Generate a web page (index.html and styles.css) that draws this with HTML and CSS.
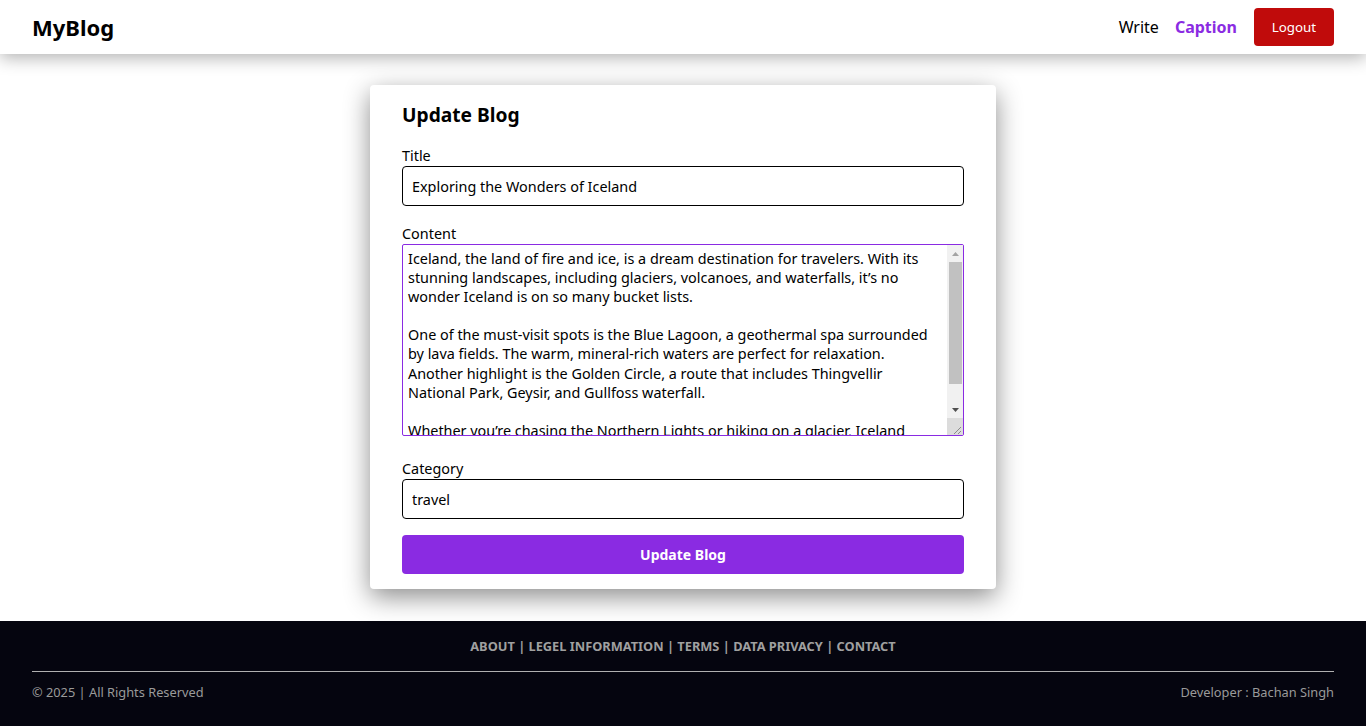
FILE: index.html
```html
<!DOCTYPE html>
<html lang="en">
<head>
<meta charset="utf-8">
<title>MyBlog - Update Blog</title>
<link rel="stylesheet" href="styles.css">
</head>
<body>
<header class="navbar">
  <a class="brand" href="#">MyBlog</a>
  <nav class="nav-links">
    <a class="nav-link" href="#">Write</a>
    <a class="nav-link nav-user" href="#">Caption</a>
    <button class="btn-logout" type="button">Logout</button>
  </nav>
</header>

<main class="main">
  <form class="card">
    <h2 class="card-title">Update Blog</h2>
    <div class="field">
      <label class="label" for="title">Title</label>
      <input class="input" id="title" type="text" value="Exploring the Wonders of Iceland">
    </div>
    <div class="field field-content">
      <label class="label" for="content">Content</label>
      <div class="textarea-wrap">
        <textarea class="textarea" id="content">Iceland, the land of fire and ice, is a dream destination for travelers. With its stunning landscapes, including glaciers, volcanoes, and waterfalls, it’s no wonder Iceland is on so many bucket lists.

One of the must-visit spots is the Blue Lagoon, a geothermal spa surrounded by lava fields. The warm, mineral-rich waters are perfect for relaxation. Another highlight is the Golden Circle, a route that includes Thingvellir National Park, Geysir, and Gullfoss waterfall.

Whether you’re chasing the Northern Lights or hiking on a glacier, Iceland offers unforgettable experiences for every kind of adventurer. Don’t forget to try local dishes and enjoy the warm hospitality of the Icelandic people.</textarea>
        <div class="scrollbar" aria-hidden="true">
          <div class="sb-btn">
            <svg width="7" height="4" viewBox="0 0 7 4"><path d="M3.5 0L7 4H0z" fill="#a3a3a3"/></svg>
          </div>
          <div class="sb-track">
            <div class="sb-thumb"></div>
          </div>
          <div class="sb-btn">
            <svg width="7" height="4" viewBox="0 0 7 4"><path d="M0 0h7L3.5 4z" fill="#505050"/></svg>
          </div>
          <div class="sb-resizer">
            <svg width="16" height="17" viewBox="0 0 16 17"><path d="M14 9L7 16M14 13L11 16" stroke="#8a8a8a" stroke-width="1"/></svg>
          </div>
        </div>
      </div>
    </div>
    <div class="field">
      <label class="label" for="category">Category</label>
      <input class="input" id="category" type="text" value="travel">
    </div>
    <button class="btn-submit" type="button">Update Blog</button>
  </form>
</main>

<footer class="footer">
  <div class="footer-links">
    <a href="#">ABOUT</a> | <a href="#">LEGEL INFORMATION</a> | <a href="#">TERMS</a> | <a href="#">DATA PRIVACY</a> | <a href="#">CONTACT</a>
  </div>
  <hr class="footer-rule">
  <div class="footer-bottom">
    <span>© 2025 | All Rights Reserved</span>
    <span>Developer : Bachan Singh</span>
  </div>
</footer>
</body>
</html>
```

FILE: styles.css
```css
* {
  box-sizing: border-box;
}

html, body {
  margin: 0;
  padding: 0;
}

body {
  font-family: "Noto Sans", "Open Sans", sans-serif;
  color: #000;
  background: #fff;
}

a {
  text-decoration: none;
  color: inherit;
}

.navbar {
  height: 54px;
  display: flex;
  align-items: center;
  justify-content: space-between;
  padding: 0 32px;
  background: #fff;
  box-shadow: 0 4px 16px rgba(0, 0, 0, 0.3);
  position: relative;
  z-index: 2;
}

.brand {
  font-size: 22px;
  font-weight: 700;
  color: #000;
}

.nav-links {
  display: flex;
  align-items: center;
}

.nav-link {
  font-size: 16px;
  color: #000;
}

.nav-user {
  color: #8a2be2;
  font-weight: 700;
  margin-left: 16px;
}

.btn-logout {
  font-family: inherit;
  font-size: 13.33px;
  color: #fff;
  background: #c00b0b;
  border: none;
  border-radius: 4px;
  height: 38px;
  width: 80px;
  padding: 0;
  margin-left: 17px;
  cursor: pointer;
}

.main {
  display: flex;
  justify-content: center;
  padding: 31px 0 32px;
}

.card {
  width: 626px;
  height: 504px;
  background: #fff;
  padding: 17px 32px 14px;
  box-shadow: 0 8px 26px rgba(0, 0, 0, 0.45);
  border-radius: 4px;
  display: flex;
  flex-direction: column;
}

.card-title {
  font-size: 19.2px;
  font-weight: 700;
  margin: 0 0 16px;
  line-height: 26px;
}

.field {
  display: flex;
  flex-direction: column;
  margin-bottom: 16px;
}

.field-content {
  margin-bottom: 21px;
}

.label {
  font-size: 14.4px;
  line-height: 21px;
  padding-top: 1px;
}

.input {
  font-family: inherit;
  font-size: 14.4px;
  height: 40px;
  border: 1px solid #000;
  border-radius: 4px;
  padding: 0 9px;
  color: #000;
  outline: none;
}

.textarea-wrap {
  position: relative;
  display: flex;
}

.textarea {
  flex: 1;
  font-family: inherit;
  font-size: 14.4px;
  line-height: 19.1px;
  height: 192px;
  border: 1px solid #8a2be2;
  border-radius: 2px;
  padding: 4px 22px 4px 5px;
  color: #000;
  outline: none;
  resize: none;
  overflow: hidden;
}

.scrollbar {
  position: absolute;
  top: 1px;
  right: 1px;
  bottom: 1px;
  width: 16px;
  background: #f1f1f1;
  display: flex;
  flex-direction: column;
}

.sb-btn {
  height: 17px;
  display: flex;
  align-items: center;
  justify-content: center;
}

.sb-track {
  flex: 1;
  padding: 0 1px 0 2px;
}

.sb-thumb {
  height: 122px;
  background: #c1c1c1;
}

.sb-resizer {
  height: 17px;
  background: #dcdcdc;
  display: flex;
}

.btn-submit {
  font-family: inherit;
  font-size: 14px;
  font-weight: 700;
  color: #fff;
  background: #8a2be2;
  border: none;
  border-radius: 4px;
  height: 39px;
  flex-shrink: 0;
  cursor: pointer;
}

.footer {
  background: #05050f;
  color: #a0a0a0;
  padding: 16px 32px 26px;
}

.footer-links {
  text-align: center;
  font-size: 12.8px;
  font-weight: 700;
  line-height: 18px;
  color: #a0a0a0;
}

.footer-links a {
  color: #a0a0a0;
}

.footer-rule {
  border: none;
  border-top: 1px solid #b0b0b0;
  margin: 16px 0 11px;
}

.footer-bottom {
  display: flex;
  justify-content: space-between;
  font-size: 12.8px;
  line-height: 18px;
  color: #9a9a9a;
}
```
